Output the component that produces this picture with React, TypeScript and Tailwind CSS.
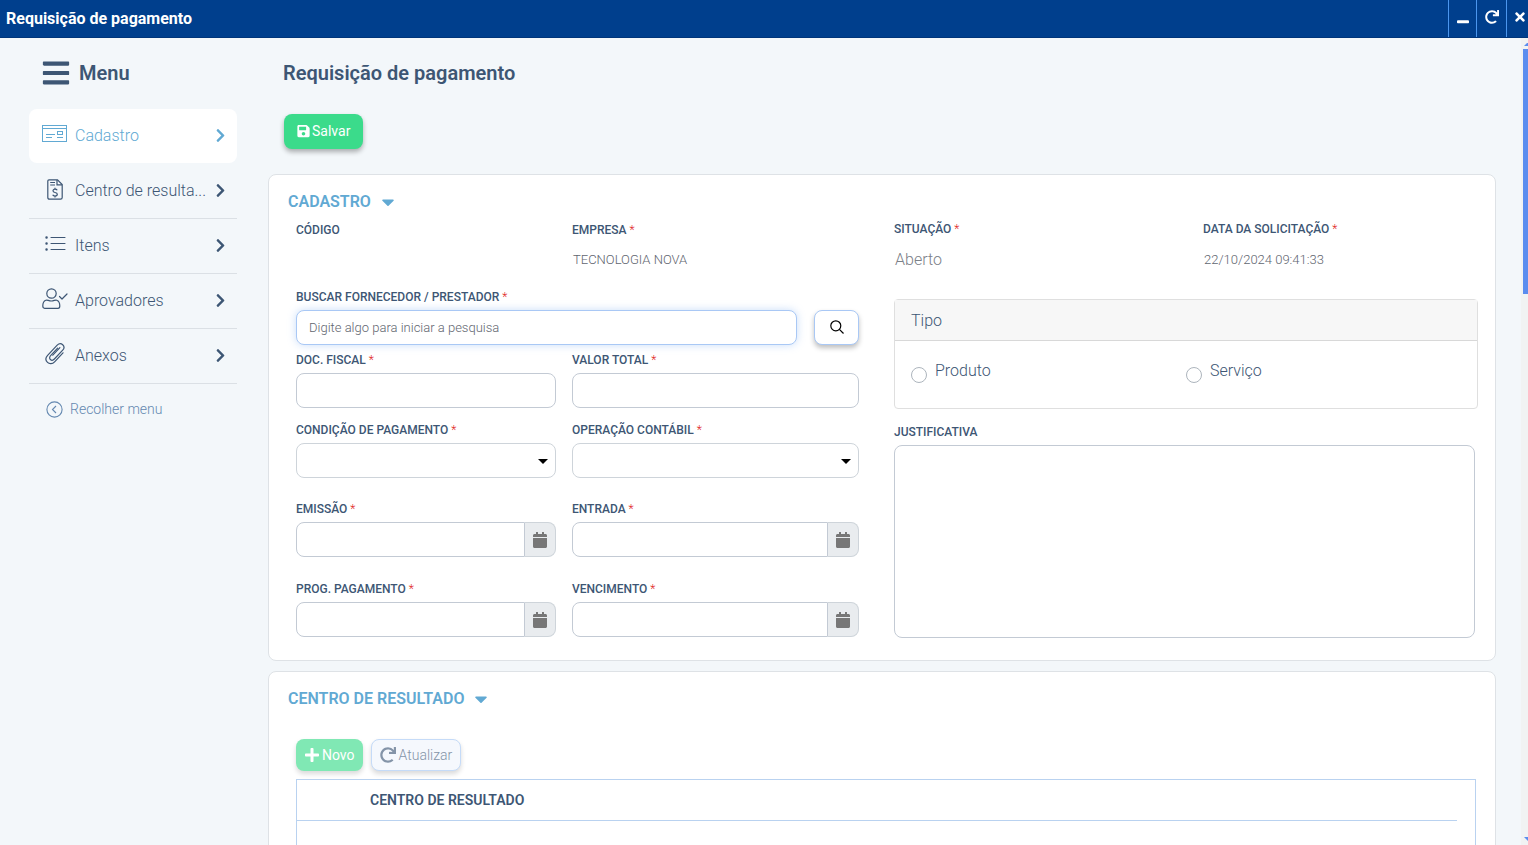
import React, { useState } from 'react';
import {
  FaBars,
  FaCalendar,
  FaCaretDown,
  FaChevronRight,
  FaPlus,
  FaRedo,
  FaSave,
  FaTimes,
  FaWindowMinimize,
} from 'react-icons/fa';

const CardIcon = () => (
  <svg width="26" height="18" viewBox="0 0 26 18" fill="none" stroke="currentColor">
    <rect x="0.5" y="0.5" width="24" height="16" />
    <path d="M0.5 3.5H24.5M4 9.5H13M4 12.5H10M15 12.5H21" />
    <rect x="15.5" y="6.5" width="5" height="3" />
  </svg>
);

const InvoiceIcon = () => (
  <svg width="16" height="21" viewBox="0 0 16 21" fill="none" stroke="currentColor" strokeWidth="1.2">
    <path d="M2 .8H10.5L15.2 5.5V18.5Q15.2 20.2 13.5 20.2H2.5Q.8 20.2 .8 18.5V2Q.8 .8 2 .8Z" />
    <path d="M10 1V5.8H15M3.2 3.5H8M3.2 6H8" />
    <path d="M10.2 11.2Q9.6 10.2 8 10.2Q6 10.2 6 11.8Q6 13.2 8 13.5Q10.3 13.8 10.3 15.3Q10.3 17 8 17Q6.2 17 5.7 15.8M8 8.8V10.2M8 17V18.4" />
  </svg>
);

const ListIcon = () => (
  <svg width="21" height="16" viewBox="0 0 21 16" fill="none" stroke="currentColor" strokeLinecap="round">
    <path d="M6 1.5H20M6 7.5H20M6 13.5H20" strokeWidth="1.1" />
    <path d="M1.5 1.5H1.6M1.5 7.5H1.6M1.5 13.5H1.6" strokeWidth="2.4" />
  </svg>
);

const UserCheckIcon = () => (
  <svg width="26" height="22" viewBox="0 0 26 22" fill="none" stroke="currentColor" strokeWidth="1.2" strokeLinecap="round" strokeLinejoin="round">
    <circle cx="9.5" cy="5.5" r="4.7" />
    <path d="M3.8 12.2C5.5 11.6 6.5 13 9.3 13S13 11.6 14.8 12.2C17.2 13 17.8 15.5 17.8 18Q17.8 20.3 16 20.3H2.6Q.8 20.3 .8 18C.8 15.5 1.4 13 3.8 12.2Z" />
    <path d="M17.5 8.5L20 11L25 6" />
  </svg>
);

const ClipIcon = () => (
  <svg width="20" height="22" viewBox="0 0 20 22" fill="none" stroke="currentColor" strokeWidth="1.2" strokeLinecap="round">
    <path d="M18 9.8L9.6 18.8C7.4 21.1 4.4 21.3 2.5 19.4C.4 17.4 .6 14.5 2.6 12.3L12.2 2.2C13.9 .5 16.2 .4 17.7 1.8C19.3 3.3 19.2 5.6 17.7 7.2L9.4 16C8.1 17.4 6.5 17.5 5.4 16.5S4.4 13.9 5.6 12.6L12.6 5.2" />
    <path d="M14.9 4.6L7.8 12.2" />
  </svg>
);

const CollapseIcon = () => (
  <svg width="17" height="17" viewBox="0 0 17 17" fill="none" stroke="currentColor" strokeWidth="1.1">
    <circle cx="8.5" cy="8.5" r="7.6" />
    <path d="M10 5L6.5 8.5L10 12" />
  </svg>
);

const SearchIcon = () => (
  <svg width="14" height="14" viewBox="0 0 14 14" fill="none" stroke="currentColor" strokeWidth="1.2">
    <circle cx="5.8" cy="5.8" r="5" />
    <path d="M9.4 9.4L13.5 13.5" />
  </svg>
);

const menuItems = [
  { id: 'cadastro', label: 'Cadastro', icon: <CardIcon /> },
  { id: 'centro', label: 'Centro de resulta...', icon: <InvoiceIcon /> },
  { id: 'itens', label: 'Itens', icon: <ListIcon /> },
  { id: 'aprovadores', label: 'Aprovadores', icon: <UserCheckIcon /> },
  { id: 'anexos', label: 'Anexos', icon: <ClipIcon /> },
];

const labelClass = 'block text-xs leading-5 font-medium text-[#3d5674]';
const inputClass = 'block h-[35px] w-full rounded-lg border border-[#c3cad4] bg-white px-3 text-[13px] outline-none';

const Required = () => <span className="font-light text-[#e02020]"> *</span>;

interface FieldProps {
  id: string;
  label: string;
}

const TextField: React.FC<FieldProps> = ({ id, label }) => (
  <div>
    <label htmlFor={id} className={labelClass}>
      {label}
      <Required />
    </label>
    <input id={id} type="text" className={`${inputClass} mt-[3px]`} />
  </div>
);

const SelectField: React.FC<FieldProps> = ({ id, label }) => (
  <div>
    <label htmlFor={id} className={labelClass}>
      {label}
      <Required />
    </label>
    <div className="relative mt-[3px]">
      <select id={id} className="block h-[35px] w-full appearance-none rounded-lg border border-[#ced4da] bg-white px-3 text-[13px]">
        <option value=""></option>
      </select>
      <svg className="pointer-events-none absolute right-2 top-4" width="10" height="5" viewBox="0 0 10 5">
        <path d="M0 0H10L5 5Z" fill="black" />
      </svg>
    </div>
  </div>
);

const DateField: React.FC<FieldProps> = ({ id, label }) => (
  <div>
    <label htmlFor={id} className={labelClass}>
      {label}
      <Required />
    </label>
    <div className="mt-[3px] flex h-[35px]">
      <input id={id} type="text" className="min-w-0 flex-1 rounded-l-lg border border-[#c3cad4] bg-white px-3 text-[13px] outline-none" />
      <button
        type="button"
        aria-label={`Abrir calendário: ${label}`}
        className="flex w-[31px] items-center justify-center rounded-r-lg border border-l-0 border-[#ced4da] bg-[#e9ecef] text-[#777]"
      >
        <FaCalendar className="h-4 w-4" />
      </button>
    </div>
  </div>
);

const SectionTitle: React.FC<{ children: React.ReactNode }> = ({ children }) => (
  <h2 className="text-base leading-5 font-semibold text-[#61a9d3]">
    <button type="button" className="flex items-center gap-[7px]">
      {children}
      <FaCaretDown className="h-5 w-5" />
    </button>
  </h2>
);

const Sidebar = () => {
  const [active, setActive] = useState('cadastro');

  return (
    <nav className="w-[268px] shrink-0 pl-[29px] pr-[31px] pt-5">
      <div className="mb-[21px] flex items-center gap-2 pl-3 text-xl leading-[30px] font-semibold text-[#3d5674]">
        <FaBars className="h-[30px] w-[30px]" />
        Menu
      </div>
      <ul>
        {menuItems.map(item => {
          const isActive = item.id === active;
          return (
            <li key={item.id} className={`border-b ${isActive ? 'border-transparent' : 'border-[#dbe0e5]'}`}>
              <button
                type="button"
                onClick={() => setActive(item.id)}
                className={`flex h-[54px] w-full items-center rounded-lg pl-[13px] pr-[11px] text-left text-base font-light ${
                  isActive ? 'bg-white text-[#61a9d3]' : 'text-[#3d5674]'
                }`}
              >
                <span className="mr-[7px] flex w-[26px] shrink-0 justify-center pb-1">{item.icon}</span>
                <span className="flex-1 whitespace-nowrap">{item.label}</span>
                <span className="shrink-0 pb-0.5">
                  <FaChevronRight className="h-[15px] w-[11px]" />
                </span>
              </button>
            </li>
          );
        })}
      </ul>
      <button type="button" className="mt-[14px] flex items-center gap-[7px] pl-[17px] text-sm leading-[22px] font-light text-[#6488b0]">
        <CollapseIcon />
        Recolher menu
      </button>
    </nav>
  );
};

const Cadastro = () => (
  <section className="rounded-lg border border-[#dee2e6] bg-white pt-[17px] pr-[17px] pb-[22px] pl-[27px]">
    <div className="-ml-2">
      <SectionTitle>CADASTRO</SectionTitle>
    </div>
    <div className="mt-[7px] grid grid-cols-[563fr_584fr] gap-x-[35px]">
      <div className="pt-px">
        <div className="grid h-[67px] grid-cols-[260fr_287fr] gap-x-4">
          <div className={labelClass}>CÓDIGO</div>
          <div>
            <div className={labelClass}>
              EMPRESA
              <Required />
            </div>
            <div className="mt-[11px] pl-px text-[13px] leading-[18px] font-light text-[#5f6670]">TECNOLOGIA NOVA</div>
          </div>
        </div>
        <label htmlFor="fornecedor" className={labelClass}>
          BUSCAR FORNECEDOR / PRESTADOR
          <Required />
        </label>
        <div className="mt-[3px] flex gap-[17px]">
          <input
            id="fornecedor"
            type="text"
            placeholder="Digite algo para iniciar a pesquisa"
            className="h-[35px] min-w-0 flex-1 rounded-lg border border-[#a9c8f5] bg-white px-3 text-[13px] font-light text-[#5f6670] shadow-[0_0_8px_rgba(120,170,240,0.4)] outline-none placeholder:text-[#5f6670]"
          />
          <button
            type="button"
            aria-label="Pesquisar"
            className="flex h-[35px] w-[45px] items-center justify-center rounded-lg border border-[#a9c8f5] bg-white pb-0.5 text-black shadow-[0_3px_5px_rgba(0,0,0,0.25)]"
          >
            <SearchIcon />
          </button>
        </div>
        <div className="mt-[5px] grid grid-cols-[260fr_287fr] gap-x-4">
          <TextField id="doc" label="DOC. FISCAL" />
          <TextField id="valor" label="VALOR TOTAL" />
        </div>
        <div className="mt-3 grid grid-cols-[260fr_287fr] gap-x-4">
          <SelectField id="condicao" label="CONDIÇÃO DE PAGAMENTO" />
          <SelectField id="operacao" label="OPERAÇÃO CONTÁBIL" />
        </div>
        <div className="mt-[21px] grid grid-cols-[260fr_287fr] gap-x-4 gap-y-[22px]">
          <DateField id="emissao" label="EMISSÃO" />
          <DateField id="entrada" label="ENTRADA" />
          <DateField id="prog" label="PROG. PAGAMENTO" />
          <DateField id="vencimento" label="VENCIMENTO" />
        </div>
      </div>

      <div>
        <div className="grid h-20 grid-cols-[309fr_275fr]">
          <div>
            <div className={labelClass}>
              SITUAÇÃO
              <Required />
            </div>
            <div className="mt-[11px] pl-px text-base leading-5 font-light text-[#7b8088]">Aberto</div>
          </div>
          <div>
            <div className={labelClass}>
              DATA DA SOLICITAÇÃO
              <Required />
            </div>
            <div className="mt-[11px] pl-px text-[13px] leading-5 font-light text-[#5f6670]">22/10/2024 09:41:33</div>
          </div>
        </div>
        <fieldset className="rounded border border-[#dfdfdf]">
          <div className="border-b border-[#d8d8d8] bg-[#f7f7f7] px-4 pt-[9px] pb-[7px] text-base font-light text-[#3d5674]">Tipo</div>
          <div className="grid h-[67px] grid-cols-2 px-4 pt-[18px] text-base font-light text-[#3d5674]">
            {['Produto', 'Serviço'].map(option => (
              <label key={option} className="flex items-start gap-2">
                <input type="radio" name="tipo" className="mt-2 h-4 w-4 appearance-none rounded-full border border-[#adb5bd] bg-white checked:border-4 checked:border-[#61a9d3]" />
                {option}
              </label>
            ))}
          </div>
        </fieldset>
        <label htmlFor="justificativa" className={`${labelClass} mt-[13px]`}>
          JUSTIFICATIVA
        </label>
        <div className="mt-[3px] pr-[3px]">
          <textarea id="justificativa" className="block h-[193px] w-full resize-none rounded-lg border border-[#c3cad4] bg-white p-3 text-[13px] outline-none" />
        </div>
      </div>
    </div>
  </section>
);

const CentroResultado = () => (
  <section className="mt-[10px] h-[400px] rounded-lg border border-[#dee2e6] bg-white pt-[17px] pr-[19px] pl-[27px]">
    <div className="-ml-2">
      <SectionTitle>CENTRO DE RESULTADO</SectionTitle>
    </div>
    <div className="mt-[30px] flex gap-2 text-sm font-light">
      <button type="button" disabled className="flex h-8 items-center gap-0.5 rounded-lg bg-[#80e8b4] px-2 font-normal text-white shadow-[0_3px_5px_rgba(0,0,0,0.15)]">
        <FaPlus className="h-4 w-4" />
        Novo
      </button>
      <button type="button" disabled className="flex h-8 items-center gap-[3px] rounded-lg border border-[#c5dbf8] bg-[#f5f8fd] px-2 text-[#8494a8] shadow-[0_3px_5px_rgba(0,0,0,0.15)]">
        <FaRedo className="h-4 w-4" />
        Atualizar
      </button>
    </div>
    <div className="mt-2 h-[300px] border border-[#b9d2f0] pr-[18px]">
      <table className="w-full">
        <thead>
          <tr className="h-10 border-b border-[#b9d2f0]">
            <th scope="col" className="pl-[73px] text-left text-sm font-semibold text-[#3d5674]">CENTRO DE RESULTADO</th>
          </tr>
        </thead>
      </table>
    </div>
  </section>
);

const App = () => {
  return (
    <div className="flex h-screen flex-col overflow-hidden bg-[#f3f7fa] font-[Roboto,sans-serif]">
      <header className="flex h-[38px] shrink-0 items-center border-b border-[#00357a] bg-[#003f8d] text-white">
        <span className="flex-1 pl-1.5 text-base font-bold">Requisição de pagamento</span>
        <button type="button" aria-label="Minimizar" className="flex h-full w-7 items-center justify-center border-l border-[#4b96ee] pb-0.5">
          <FaWindowMinimize className="h-3 w-3" />
        </button>
        <button type="button" aria-label="Recarregar" className="flex h-full w-[30px] items-center justify-center border-l border-[#4b96ee] pb-1">
          <FaRedo className="h-[14px] w-[14px]" />
        </button>
        <button type="button" aria-label="Fechar" className="flex h-full w-[22px] items-center border-l border-[#4b96ee] pb-1 pl-[6px]">
          <FaTimes className="h-[14px] w-[14px]" />
        </button>
      </header>

      <div className="flex min-h-0 flex-1">
        <Sidebar />
        <main className="min-w-0 flex-1 overflow-hidden pt-5 pr-[25px]">
          <h1 className="pl-[15px] text-xl leading-[30px] font-semibold text-[#3d5674]">Requisição de pagamento</h1>
          <button
            type="button"
            className="mt-[26px] mb-[25px] ml-4 flex h-[35px] items-center gap-0.5 rounded-lg bg-[#3bdb8b] px-[13px] pb-0.5 text-sm text-white shadow-[0_3px_5px_rgba(0,0,0,0.3)]"
          >
            <FaSave className="h-[14px] w-[13px]" />
            Salvar
          </button>
          <Cadastro />
          <CentroResultado />
        </main>
        <div className="flex w-[7px] shrink-0 flex-col justify-between bg-[#f1f3f3] pl-0.5">
          <div>
            <svg width="5" height="11" viewBox="0 0 5 11">
              <path d="M1 8L4 5L5 5V8Z" fill="#5b8def" />
            </svg>
            <div className="h-[245px] bg-[#5b8def]" />
          </div>
          <svg width="5" height="8" viewBox="0 0 5 8">
            <path d="M1 0H5V4L4 3Z" fill="#5b8def" />
          </svg>
        </div>
      </div>
    </div>
  );
};

export default App;
